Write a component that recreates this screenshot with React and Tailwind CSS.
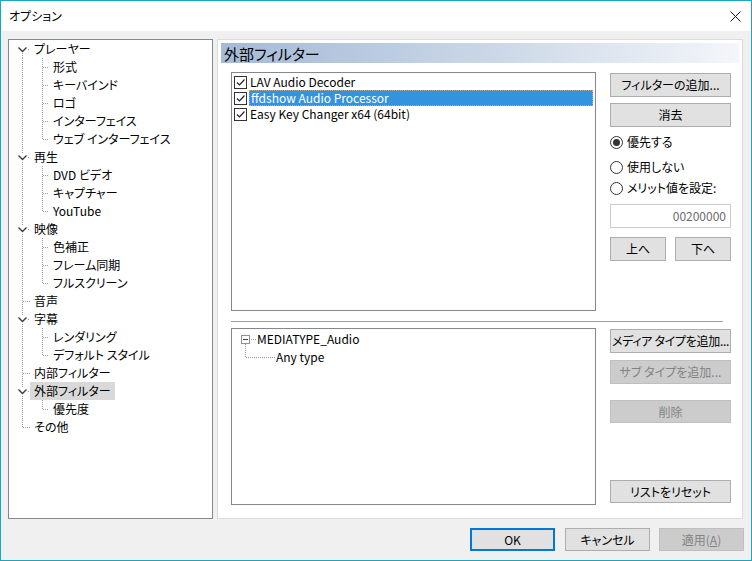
import React from 'react';

const tree = [
  { label: 'プレーヤー', level: 0, expand: true, first: true },
  { label: '形式', level: 1 },
  { label: 'キーバインド', level: 1 },
  { label: 'ロゴ', level: 1 },
  { label: 'インターフェイス', level: 1 },
  { label: 'ウェブ インターフェイス', level: 1, last: true },
  { label: '再生', level: 0, expand: true },
  { label: 'DVD ビデオ', level: 1 },
  { label: 'キャプチャー', level: 1 },
  { label: 'YouTube', level: 1, last: true },
  { label: '映像', level: 0, expand: true },
  { label: '色補正', level: 1 },
  { label: 'フレーム同期', level: 1 },
  { label: 'フルスクリーン', level: 1, last: true },
  { label: '音声', level: 0 },
  { label: '字幕', level: 0, expand: true },
  { label: 'レンダリング', level: 1 },
  { label: 'デフォルト スタイル', level: 1, last: true },
  { label: '内部フィルター', level: 0 },
  { label: '外部フィルター', level: 0, expand: true, selected: true },
  { label: '優先度', level: 1, last: true },
  { label: 'その他', level: 0, last: true },
];

const filters = [
  { name: 'LAV Audio Decoder' },
  { name: 'ffdshow Audio Processor', selected: true },
  { name: 'Easy Key Changer x64 (64bit)' },
];

const dot = { stroke: '#9a9a9a', strokeWidth: 1, strokeDasharray: '1 1', shapeRendering: 'crispEdges' };

const TreeLines = ({ item }) => {
  if (item.level === 0) {
    return (
      <svg width="21" height="18" className="shrink-0">
        <line x1="13.5" y1={item.first ? 9 : 0} x2="13.5" y2={item.last ? 10 : 18} style={dot} />
        {item.expand ? (
          <>
            <rect x="8" y="5" width="11" height="8" fill="white" />
            <path d="M9.5 7.5 L13.5 11.5 L17.5 7.5" fill="none" stroke="#3c3c3c" strokeWidth="1.4" />
            <rect x="19" y="9" width="1" height="1" fill="#9a9a9a" />
          </>
        ) : (
          <line x1="14" y1="9.5" x2="21" y2="9.5" style={dot} />
        )}
      </svg>
    );
  }
  return (
    <svg width="40" height="18" className="shrink-0">
      <line x1="13.5" y1="0" x2="13.5" y2="18" style={dot} />
      <line x1="33.5" y1="0" x2="33.5" y2={item.last ? 10 : 18} style={dot} />
      <line x1="34" y1="9.5" x2="41" y2="9.5" style={dot} />
    </svg>
  );
};

const Btn = ({ children, className = '', disabled, primary }) => (
  <div
    className={`flex items-center justify-center text-[12px] whitespace-nowrap ${
      disabled
        ? 'bg-[#cccccc] border border-[#bfbfbf] text-[#838383]'
        : primary
        ? 'bg-[#e1e1e1] border-2 border-[#0078d7] text-black'
        : 'bg-[#e1e1e1] border border-[#adadad] text-black'
    } ${className}`}
  >
    {children}
  </div>
);

const Radio = ({ checked, label, className = '' }) => (
  <div className={`flex items-center h-[16px] gap-[4px] ${className}`}>
    <div className="w-[13px] h-[13px] rounded-full border border-[#333333] bg-white flex items-center justify-center">
      {checked && <div className="w-[7px] h-[7px] rounded-full bg-[#333333]" />}
    </div>
    <span className="text-[12px]">{label}</span>
  </div>
);

const Check = () => (
  <div className="w-[13px] h-[13px] border border-[#333333] bg-white shrink-0">
    <svg width="11" height="11" viewBox="0 0 11 11">
      <path d="M2 5.5 L4.5 8 L9.5 2.5" fill="none" stroke="#222" strokeWidth="1.2" />
    </svg>
  </div>
);

export default function App() {
  return (
    <div className="w-[752px] h-[561px] border border-[#19a7c0] flex flex-col text-black [font-family:'Noto_Sans_CJK_JP',sans-serif] [font-feature-settings:'palt'] overflow-hidden">
      {/* title bar */}
      <div className="h-[30px] bg-white flex items-center justify-between pl-[8px] pr-[10px] shrink-0">
        <span className="text-[12px]">オプション</span>
        <svg width="11" height="11" viewBox="0 0 11 11">
          <path d="M0.5 0.5 L10.5 10.5 M10.5 0.5 L0.5 10.5" stroke="#111" strokeWidth="1" />
        </svg>
      </div>

      <div className="flex-1 bg-[#f0f0f0] flex flex-col pt-[8px] pl-[7px] pr-[7px]">
        <div className="flex gap-[4px]">
          {/* tree */}
          <div className="w-[205px] h-[480px] border border-[#828790] bg-white">
            {tree.map((item) => (
              <div key={item.label} className="flex h-[18px] items-center">
                <TreeLines item={item} />
                <span
                  className={`h-[18px] flex items-center px-[4px] text-[12px] whitespace-nowrap ${
                    item.selected ? 'bg-[#d9d9d9]' : ''
                  }`}
                >
                  {item.label}
                </span>
              </div>
            ))}
          </div>

          {/* right page */}
          <div className="w-[526px] h-[480px] border border-[#dcdcdc] bg-white flex flex-col">
            <div className="mx-[3px] mt-[3px] h-[20px] bg-gradient-to-r from-[#a5bad6] via-[#c9d6e6] to-[#f4f6fa] flex items-center pl-[3px]">
              <span className="text-[15px] leading-none">外部フィルター</span>
            </div>

            {/* filter list row */}
            <div className="flex mt-[9px] pl-[13px] gap-[14px]">
              <div className="w-[365px] h-[239px] border border-[#828790] bg-white pt-[1px]">
                {filters.map((f) => (
                  <div key={f.name} className="flex items-center h-[16px] pl-[2px] pr-[2px]">
                    <Check />
                    <div
                      className={`flex-1 h-[16px] ml-[2px] pl-[1px] flex items-center text-[12px] whitespace-nowrap ${
                        f.selected ? 'bg-[#3393df] text-white border border-dotted border-[#e9a13b]' : ''
                      }`}
                    >
                      {f.name}
                    </div>
                  </div>
                ))}
              </div>

              <div className="w-[121px] flex flex-col pt-[1px]">
                <Btn className="h-[24px]">フィルターの追加...</Btn>
                <Btn className="h-[24px] mt-[6px]">消去</Btn>
                <Radio checked label="優先する" className="mt-[7px]" />
                <Radio label="使用しない" className="mt-[9px]" />
                <Radio label="メリット値を設定:" className="mt-[5px]" />
                <div className="mt-[8px] h-[24px] border border-[#cccccc] bg-white flex items-center justify-end pr-[4px] text-[12px] text-[#6d6d6d]">
                  00200000
                </div>
                <div className="mt-[9px] flex justify-between">
                  <Btn className="w-[56px] h-[24px]">上へ</Btn>
                  <Btn className="w-[56px] h-[24px]">下へ</Btn>
                </div>
              </div>
            </div>

            <div className="ml-[13px] mt-[10px] w-[492px] h-[2px] border-t border-[#a0a0a0] border-b border-b-white" />

            {/* media type row */}
            <div className="flex mt-[5px] pl-[13px] gap-[14px]">
              <div className="w-[365px] h-[177px] border border-[#828790] bg-white pt-[1px]">
                <div className="flex items-center h-[18px]">
                  <svg width="25" height="18" className="shrink-0">
                    <rect x="9.5" y="5.5" width="8" height="8" fill="white" stroke="#919191" shapeRendering="crispEdges" />
                    <line x1="11" y1="9.5" x2="16" y2="9.5" stroke="#2b3f8f" shapeRendering="crispEdges" />
                    <line x1="13.5" y1="14" x2="13.5" y2="18" style={dot} />
                    <line x1="19" y1="9.5" x2="25" y2="9.5" style={dot} />
                  </svg>
                  <span className="text-[12px]">MEDIATYPE_Audio</span>
                </div>
                <div className="flex items-center h-[18px]">
                  <svg width="44" height="18" className="shrink-0">
                    <line x1="13.5" y1="0" x2="13.5" y2="10" style={dot} />
                    <line x1="14" y1="9.5" x2="43" y2="9.5" style={dot} />
                  </svg>
                  <span className="text-[12px]">Any type</span>
                </div>
              </div>

              <div className="w-[121px] flex flex-col pt-[1px]">
                <Btn className="h-[24px] tracking-[-0.3px]">メディア タイプを追加...</Btn>
                <Btn disabled className="h-[24px] mt-[7px]">サブ タイプを追加...</Btn>
                <Btn disabled className="h-[23px] mt-[16px]">削除</Btn>
                <Btn className="h-[23px] mt-[57px]">リストをリセット</Btn>
              </div>
            </div>
          </div>
        </div>

        {/* footer */}
        <div className="mt-[9px] flex justify-end">
          <Btn primary className="w-[85px] h-[23px]">OK</Btn>
          <Btn className="w-[85px] h-[23px] ml-[10px]">キャンセル</Btn>
          <Btn disabled className="w-[85px] h-[23px] ml-[9px]">
            <span>
              適用(<span className="underline">A</span>)
            </span>
          </Btn>
        </div>
      </div>
    </div>
  );
}
